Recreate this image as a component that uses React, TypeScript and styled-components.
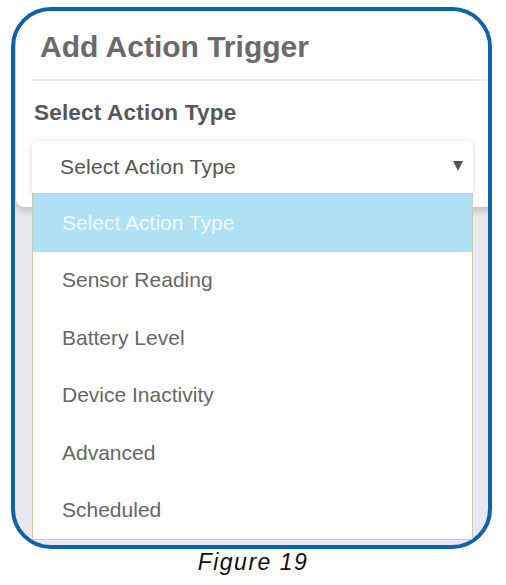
import React from "react";
import styled, { createGlobalStyle } from "styled-components";

const Global = createGlobalStyle`
  html, body { margin: 0; padding: 0; background: #ffffff; }
  body { font-family: "Liberation Sans", Arial, sans-serif; }
`;

const Page = styled.div`
  width: 506px;
  height: 585px;
  padding: 7px 0 0 11px;
  box-sizing: border-box;
  display: flex;
  flex-direction: column;
  align-items: flex-start;
`;

const Frame = styled.div`
  position: relative;
  width: 481px;
  height: 542px;
  box-sizing: border-box;
  border: 4px solid #0d63a8;
  border-radius: 40px;
  background: #e9e8ee;
  overflow: hidden;
`;

const Modal = styled.div`
  margin-left: 1px;
  margin-right: -30px;
  margin-top: -10px;
  padding: 10px 0 14px 0;
  background: #ffffff;
  border-radius: 0 0 8px 8px;
  box-shadow: 0 3px 8px rgba(0, 0, 0, 0.22);
`;

const Header = styled.div`
  margin-left: 16px;
  padding: 19px 0 15px 8px;
  border-bottom: 2px solid #ebebeb;
`;

const Title = styled.h1`
  margin: 0;
  font-size: 30px;
  line-height: 34px;
  font-weight: 700;
  color: #6a6a6a;
`;

const Body = styled.div`
  padding: 19px 0 0 16px;
  display: flex;
  flex-direction: column;
  gap: 15px;
`;

const Label = styled.div`
  padding-left: 2px;
  font-size: 22.5px;
  line-height: 26px;
  font-weight: 700;
  color: #575757;
  letter-spacing: 0.2px;
`;

const SelectBox = styled.div`
  position: relative;
  width: 441px;
  height: 52px;
  box-sizing: border-box;
  padding-left: 28px;
  background: #ffffff;
  border-radius: 6px 6px 0 0;
  box-shadow: 0 1px 6px rgba(0, 0, 0, 0.16);
  font-size: 21px;
  line-height: 52px;
  letter-spacing: 0.2px;
  color: #555555;

  &::after {
    content: "";
    position: absolute;
    right: 10px;
    top: 20px;
    border-left: 5px solid transparent;
    border-right: 5px solid transparent;
    border-top: 10px solid #555555;
  }
`;

const Menu = styled.ul`
  position: absolute;
  left: 17px;
  top: 182px;
  width: 441px;
  height: 347px;
  box-sizing: border-box;
  margin: 0;
  padding: 0;
  list-style: none;
  background: #ffffff;
  border: 1px solid #cfc9ad;
`;

const Option = styled.li<{ $active?: boolean }>`
  height: 57.5px;
  display: flex;
  align-items: center;
  padding-left: 29px;
  font-size: 21px;
  color: ${(p) => (p.$active ? "#f2f9fc" : "#666666")};
  background: ${(p) => (p.$active ? "#ade1f3" : "transparent")};
`;

const Caption = styled.div`
  align-self: stretch;
  margin-left: -11px;
  text-align: center;
  font-size: 23px;
  line-height: 26px;
  font-style: italic;
  letter-spacing: 1.5px;
  color: #111111;
`;

const options = [
  "Select Action Type",
  "Sensor Reading",
  "Battery Level",
  "Device Inactivity",
  "Advanced",
  "Scheduled",
];

export default function App() {
  return (
    <>
      <Global />
      <Page>
        <Frame>
          <Modal>
            <Header>
              <Title>Add Action Trigger</Title>
            </Header>
            <Body>
              <Label>Select Action Type</Label>
              <SelectBox>Select Action Type</SelectBox>
            </Body>
          </Modal>
          <Menu>
            {options.map((o, i) => (
              <Option key={o} $active={i === 0}>
                {o}
              </Option>
            ))}
          </Menu>
        </Frame>
        <Caption>Figure 19</Caption>
      </Page>
    </>
  );
}
